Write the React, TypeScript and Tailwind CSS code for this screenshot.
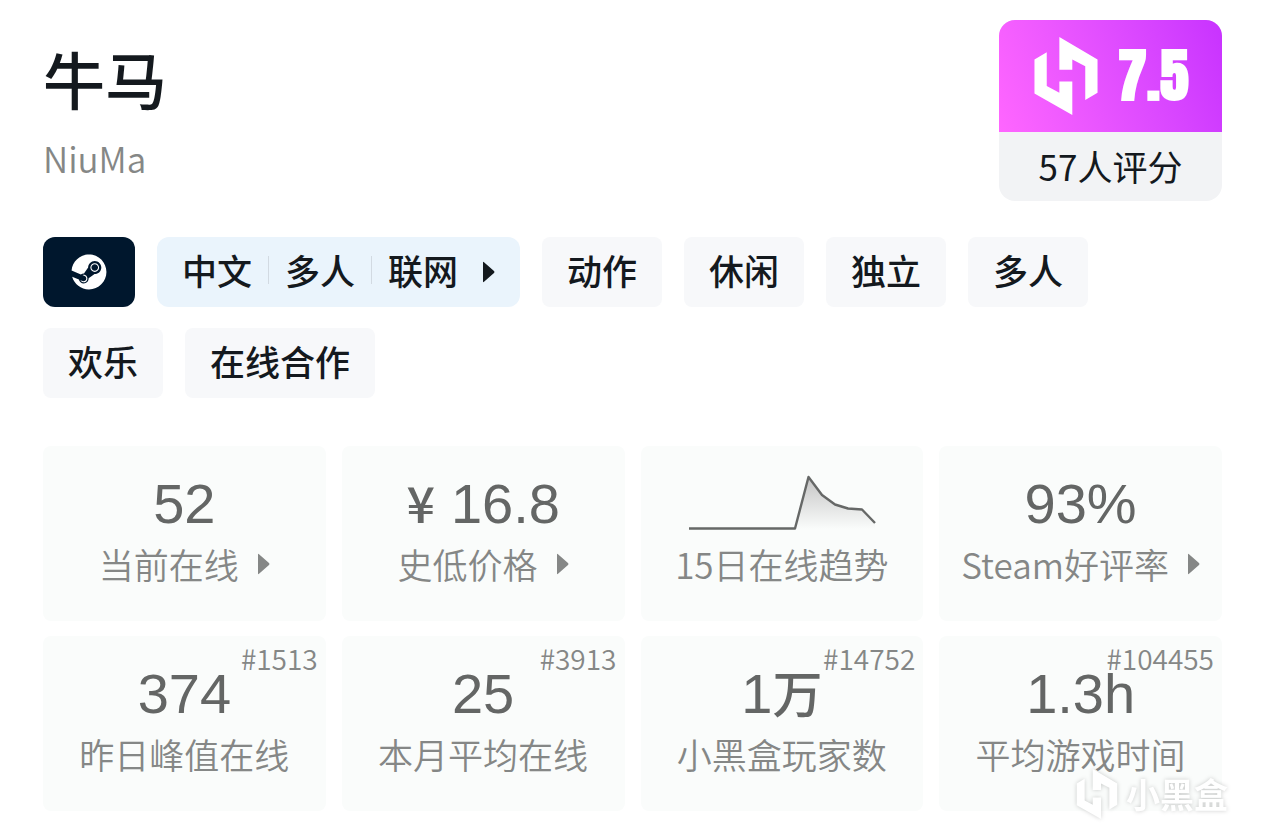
import type { ReactNode } from "react";
import { FaSteam } from "react-icons/fa";

interface Stat {
  label: string;
  value?: ReactNode;
  rank?: string;
  hasDetail?: boolean;
}

const features = ["中文", "多人", "联网"];

const tags = ["动作", "休闲", "独立", "多人", "欢乐", "在线合作"];

const stats: Stat[] = [
  { label: "当前在线", value: "52", hasDetail: true },
  {
    label: "史低价格",
    value: (
      <>
        <span className="mr-4 font-['Noto_Sans_CJK_SC',sans-serif] text-[50px] leading-none font-medium">¥</span>
        16.8
      </>
    ),
    hasDetail: true,
  },
  { label: "15日在线趋势" },
  { label: "Steam好评率", value: "93%", hasDetail: true },
  { label: "昨日峰值在线", value: "374", rank: "#1513" },
  { label: "本月平均在线", value: "25", rank: "#3913" },
  {
    label: "小黑盒玩家数",
    value: (
      <>
        1<span className="font-['Noto_Sans_CJK_SC',sans-serif] text-[50px] leading-none font-medium">万</span>
      </>
    ),
    rank: "#14752",
  },
  { label: "平均游戏时间", value: "1.3h", rank: "#104455" },
];

function HeyboxLogo({ className }: { className?: string }) {
  return (
    <svg viewBox="163 82 190 235" className={className} fill="currentColor" aria-hidden="true">
      <path d="M163 150L200 128V230L238 250V216H277V317L163 252Z" />
      <path d="M238 82L353 150V250L316 272V170L277 150V181H238Z" />
    </svg>
  );
}

function Arrow({ className }: { className?: string }) {
  return (
    <svg viewBox="0 0 13 22" className={className} fill="currentColor" aria-hidden="true">
      <path d="M1 1.5Q1 .2 2 1.2L12 10Q13 11 12 12L2 20.800Q1 21.800 1 20.500Z" />
    </svg>
  );
}

function TrendChart() {
  return (
    <svg viewBox="0 0 188 56" className="h-14 w-[188px]" fill="none" aria-hidden="true">
      <defs>
        <linearGradient id="trend" x1="0" y1="0" x2="0" y2="1">
          <stop offset="0" stopColor="#c4c4c4" />
          <stop offset="1" stopColor="#fafcfb" />
        </linearGradient>
      </defs>
      <path d="M107 55L120.500 3L134 21L147 30.500L160 34.500L174 35.500L187 49V55Z" fill="url(#trend)" />
      <path
        d="M1 54.500H107L120.500 3L134 21L147 30.500L160 34.500L174 35.500L187 49"
        stroke="#666867"
        strokeWidth="2.4"
        strokeLinejoin="round"
      />
    </svg>
  );
}

function ScoreCard() {
  return (
    <div className="w-[223px] overflow-hidden rounded-2xl bg-[#f2f3f5]">
      <div className="flex h-28 items-center gap-5 bg-linear-70 from-[#ff66ff] to-[#c832ff] pl-[35px] text-white">
        <HeyboxLogo className="h-[78px] w-16" />
        <span className="font-[Impact,Anton,'Roboto_Condensed','Open_Sans_Condensed','Noto_Sans_CJK_SC',sans-serif] text-[58px] leading-none font-bold">
          7.5
        </span>
      </div>
      <p className="flex h-[69px] items-center justify-center text-[35px] text-[#14191e]">57人评分</p>
    </div>
  );
}

function StatCard({ label, value, rank, hasDetail }: Stat) {
  return (
    <div className="relative flex h-[175px] flex-col items-center rounded-lg bg-[#fafcfb] pt-7">
      {rank && <span className="absolute top-1 right-2 text-[28px] leading-9 font-[350] text-[#858786]">{rank}</span>}
      <div className="flex h-[60px] items-baseline justify-center font-['Liberation_Sans',sans-serif] text-[56px] leading-[60px] text-[#646665]">
        {value ?? <TrendChart />}
      </div>
      {hasDetail ? (
        <button type="button" className="flex h-[60px] items-center gap-[18px] text-[35px] font-[350] text-[#858786]">
          {label}
          <Arrow className="h-[22px] w-[13px]" />
        </button>
      ) : (
        <p className="flex h-[60px] items-center text-[35px] font-[350] text-[#858786]">{label}</p>
      )}
    </div>
  );
}

export default function App() {
  return (
    <main className="relative bg-white pt-5 pr-[42px] pb-7 pl-[43px] font-['Noto_Sans_CJK_SC',sans-serif]">
      <header className="flex items-start justify-between">
        <div className="pt-5">
          <h1 className="text-[62px] leading-[76px] font-medium text-[#14191e]">牛马</h1>
          <p className="pt-3 text-[35px] leading-[60px] font-[350] text-[#858786]">NiuMa</p>
        </div>
        <ScoreCard />
      </header>

      <div className="mt-9 flex flex-wrap gap-x-[22px] gap-y-[21px] text-[35px] font-medium text-[#14191e]">
        <button
          type="button"
          aria-label="Steam"
          className="flex h-[70px] w-[92px] items-center justify-center rounded-xl bg-[#00172d] text-white"
        >
          <FaSteam className="size-9" />
        </button>
        <button type="button" className="flex h-[70px] items-center rounded-xl bg-[#eaf4fc] px-[25px]">
          {features.map((feature, index) => (
            <span key={feature} className="flex items-center pb-1">
              {index > 0 && <span className="mx-4 h-7 w-px bg-[#d2dae2]" />}
              {feature}
            </span>
          ))}
          <Arrow className="ml-6 h-[22px] w-[13px]" />
        </button>
        {tags.map((tag) => (
          <a key={tag} href="#" className="flex h-[70px] items-center rounded-lg bg-[#f7f8fa] px-[25px] pb-1">
            {tag}
          </a>
        ))}
      </div>

      <section className="mt-12 grid grid-cols-4 gap-x-4 gap-y-[15px]">
        {stats.map((stat) => (
          <StatCard key={stat.label} {...stat} />
        ))}
      </section>

      <div className="absolute right-9 bottom-5 flex items-center gap-2 text-white drop-shadow-[0_0_2px_rgba(0,0,0,0.2)]">
        <HeyboxLogo className="h-[50px] w-[42px]" />
        <span className="text-[34px] leading-[50px] font-bold">小黑盒</span>
      </div>
    </main>
  );
}
